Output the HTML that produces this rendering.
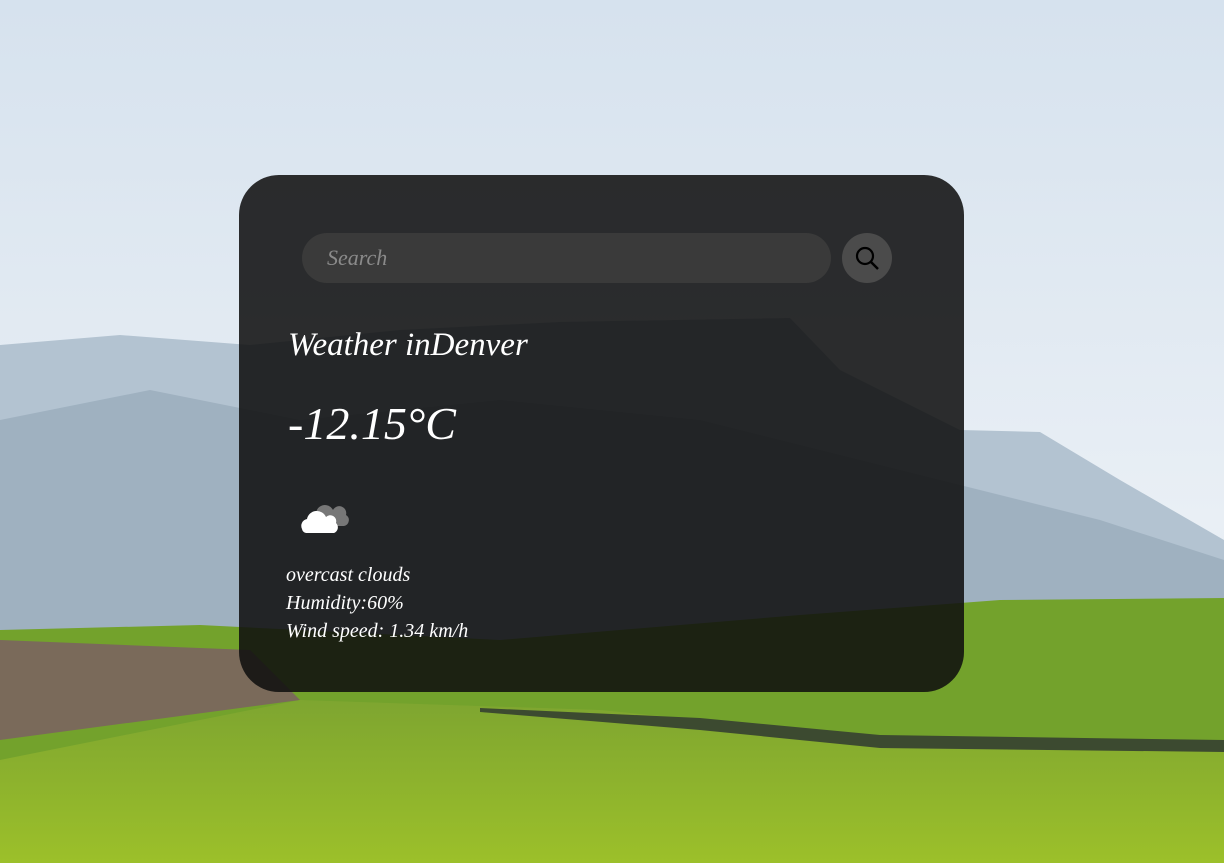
<!DOCTYPE html>
<html><head><meta charset="utf-8">
<style>
html,body{margin:0;padding:0;width:1224px;height:863px;overflow:hidden;}
body{position:relative;font-family:"Liberation Serif",serif;font-style:italic;}
.bg{position:absolute;left:0;top:0;}
.card{position:absolute;left:239px;top:175px;width:725px;height:517px;border-radius:40px;background:rgba(15,15,15,0.87);color:#fff;}
.search{position:absolute;left:63px;top:58px;width:529px;height:50px;border-radius:25px;background:#3a3a3a;}
.search span{position:absolute;left:25px;top:12px;font-size:22px;color:#8a8a8a;}
.btn{position:absolute;left:603px;top:58px;width:50px;height:50px;border-radius:50%;background:#4b4b4b;}
.t1{position:absolute;left:49px;top:152px;font-size:33px;}
.t2{position:absolute;left:49px;top:222px;font-size:46px;}
.t3{position:absolute;left:47px;top:386px;font-size:20px;line-height:28px;}
</style></head><body>
<svg class="bg" width="1224" height="863">
<defs>
<linearGradient id="sky" x1="0" y1="0" x2="0" y2="1"><stop offset="0" stop-color="#d6e2ee"/><stop offset="0.6" stop-color="#e9eff5"/><stop offset="1" stop-color="#dfe7ef"/></linearGradient>
<linearGradient id="g1" x1="0" y1="0" x2="0" y2="1"><stop offset="0" stop-color="#7ea530"/><stop offset="1" stop-color="#9cc02a"/></linearGradient>
</defs>
<rect width="1224" height="863" fill="url(#sky)"/>
<path d="M0 345 L120 335 L250 345 L400 330 L560 322 L790 318 L840 370 L960 430 L1040 432 L1120 480 L1224 540 L1224 700 L0 700Z" fill="#b3c3d1"/>
<path d="M0 420 L150 390 L300 420 L500 400 L700 420 L900 470 L1100 520 L1224 560 L1224 700 L0 700Z" fill="#9fb1c0"/>
<path d="M0 630 L200 625 L500 640 L800 615 L1000 600 L1224 598 L1224 863 L0 863Z" fill="#73a22c"/>
<path d="M0 640 L250 650 L300 700 L0 740Z" fill="#7a6a5a"/>
<path d="M0 760 L300 700 L600 710 L900 740 L1224 740 L1224 863 L0 863Z" fill="url(#g1)"/>
<path d="M480 708 L700 718 L880 735 L1224 740 L1224 752 L880 748 L700 730 L480 712Z" fill="#3c4a30"/>
</svg>
<div class="card">
<div class="search"><span>Search</span></div>
<div class="btn"><svg width="50" height="50"><circle cx="23" cy="23" r="8" fill="none" stroke="#000" stroke-width="2.2"/><line x1="29" y1="29" x2="36" y2="36" stroke="#000" stroke-width="2.5"/></svg></div>
<div class="t1">Weather inDenver</div>
<div class="t2">-12.15°C</div>
<svg style="position:absolute;left:57px;top:318px" width="60" height="40"><path d="M20 22 a9 9 0 0 1 17 -5 a7 7 0 0 1 13 5 a6 6 0 0 1 -2 11 H24Z" fill="#777"/><path d="M6 36 a7 7 0 0 1 5 -10 a10 10 0 0 1 19 -2 a6 6 0 0 1 10 6 a6 6 0 0 1 -2 10 H10 a5 5 0 0 1 -4 -4Z" fill="#fff"/></svg>
<div class="t3">overcast clouds<br>Humidity:60%<br>Wind speed: 1.34 km/h</div>
</div>
</body></html>
